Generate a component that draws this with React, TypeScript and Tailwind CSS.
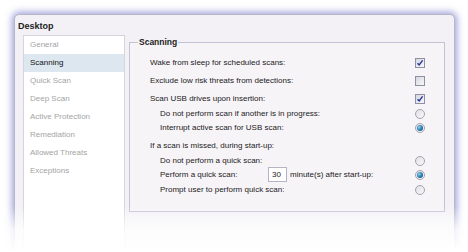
import React from "react";

const FONT = { fontFamily: "Tahoma, 'Liberation Sans', Arial, sans-serif" };

const NAV_ITEMS = [
  "General",
  "Scanning",
  "Quick Scan",
  "Deep Scan",
  "Active Protection",
  "Remediation",
  "Allowed Threats",
  "Exceptions",
];

const Checkbox = ({ checked }: { checked?: boolean }) => (
  <div className="w-[10px] h-[10px] border border-[#8f90a6] bg-gradient-to-br from-[#d6d6e0] to-[#f8f8fa] flex items-center justify-center">
    {checked && (
      <svg viewBox="0 0 8 8" className="w-[8px] h-[8px]">
        <path
          d="M1.5 4.2 L3.2 6 L6.6 1.4"
          fill="none"
          stroke="#21389a"
          strokeWidth="1.4"
        />
      </svg>
    )}
  </div>
);

const Radio = ({ checked }: { checked?: boolean }) => (
  <div className="w-[10px] h-[10px] rounded-full border border-[#a3a3ad] bg-gradient-to-br from-[#dedee6] to-[#fbfbfc] flex items-center justify-center">
    {checked && (
      <div className="w-[6px] h-[6px] rounded-full bg-[radial-gradient(circle_at_35%_35%,#8fd0f0,#1d6fa8_60%,#0e4470)]" />
    )}
  </div>
);

const Row = ({
  label,
  indent,
  height,
  control,
}: {
  label: React.ReactNode;
  indent?: boolean;
  height: string;
  control?: React.ReactNode;
}) => (
  <div className={`flex items-center justify-between ${height}`}>
    <div className={`flex items-center ${indent ? "pl-[10px]" : ""}`}>
      {label}
    </div>
    {control && <div className="w-[10px]">{control}</div>}
  </div>
);

export default function App() {
  return (
    <div
      className="w-[468px] h-[252px] bg-white relative overflow-hidden text-[8px] text-[#1a1a1a]"
      style={FONT}
    >
      <div className="ml-[14px] mt-[14px] w-[441px] h-[250px] rounded-t-[5px] border border-[#b9b8c8] bg-[#f3f1f5] shadow-[0_0_7px_2px_rgba(96,96,196,0.6)]">
        <div className="h-[20px] pl-[3px] pt-[5px] font-bold text-[9px] text-[#222]">
          Desktop
        </div>
        <div className="flex gap-[4px] pl-[8px]">
          <div className="w-[102px] h-[220px] bg-white border border-[#d6d4df]">
            {NAV_ITEMS.map((item) => (
              <div
                key={item}
                className={`h-[18px] flex items-center pl-[6px] ${
                  item === "Scanning"
                    ? "bg-[#dde7f0] text-[#111]"
                    : "text-[#a4a4a4]"
                }`}
              >
                {item}
              </div>
            ))}
          </div>
          <fieldset className="w-[316px] h-[176px] border border-[#c5c2d6] mt-[1px] pl-[20px] pr-[19px] bg-[#f7f4f8]">
            <legend className="ml-[-12px] px-[1px] font-bold text-[8.5px] text-[#222]">
              Scanning
            </legend>
            <div className="pt-[5px]">
              <Row
                height="h-[18px]"
                label="Wake from sleep for scheduled scans:"
                control={<Checkbox checked />}
              />
              <Row
                height="h-[18px]"
                label="Exclude low risk threats from detections:"
                control={<Checkbox />}
              />
              <Row
                height="h-[18px]"
                label="Scan USB drives upon insertion:"
                control={<Checkbox checked />}
              />
              <Row
                height="h-[13px]"
                indent
                label="Do not perform scan if another is in progress:"
                control={<Radio />}
              />
              <Row
                height="h-[14px]"
                indent
                label="Interrupt active scan for USB scan:"
                control={<Radio checked />}
              />
              <div className="h-[4px]" />
              <Row height="h-[15px]" label="If a scan is missed, during start-up:" />
              <Row
                height="h-[14px]"
                indent
                label="Do not perform a quick scan:"
                control={<Radio />}
              />
              <Row
                height="h-[14px]"
                indent
                label={
                  <>
                    <span className="w-[108px]">Perform a quick scan:</span>
                    <span className="w-[19px] h-[15px] bg-white border border-[#b4b4c4] pl-[3px] flex items-center">
                      30
                    </span>
                    <span className="pl-[3px]">minute(s) after start-up:</span>
                  </>
                }
                control={<Radio checked />}
              />
              <Row
                height="h-[16px]"
                indent
                label="Prompt user to perform quick scan:"
                control={<Radio />}
              />
            </div>
          </fieldset>
        </div>
      </div>
      <div className="absolute left-0 right-0 top-[206px] h-[46px] bg-gradient-to-b from-white/0 via-white/80 to-white" />
    </div>
  );
}
